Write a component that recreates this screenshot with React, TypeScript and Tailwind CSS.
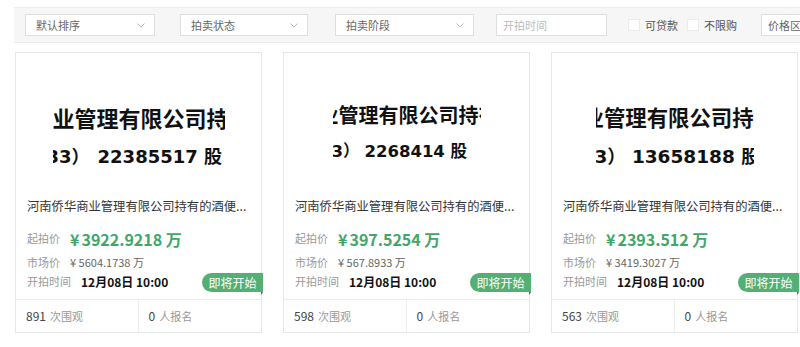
import React from "react"

type Lot = {
  id: number
  imgBox: string
  imgPad: string
  line1: string
  line1Class: string
  prefix: string
  shares: string
  line2Class: string
  sharesGap: string
  price: string
  market: string
  views: number
  signups: number
}

const LOTS: Lot[] = [
  {
    id: 1,
    imgBox: "w-[172px]",
    imgPad: "pt-[44px] leading-[40px]",
    line1: "业管理有限公司持有",
    line1Class: "text-[22px] ml-0",
    prefix: "33）",
    shares: "22385517",
    line2Class: "text-[18px] -ml-[6px]",
    sharesGap: "ml-[8px]",
    price: "3922.9218",
    market: "5604.1738",
    views: 891,
    signups: 0,
  },
  {
    id: 2,
    imgBox: "w-[148px]",
    imgPad: "pt-[43px] leading-[37px]",
    line1: "业管理有限公司持有",
    line1Class: "text-[20px] -ml-[14px]",
    prefix: "3）",
    shares: "2268414",
    line2Class: "text-[16.5px] -ml-[1px]",
    sharesGap: "ml-[5px]",
    price: "397.5254",
    market: "567.8933",
    views: 598,
    signups: 0,
  },
  {
    id: 3,
    imgBox: "w-[158px]",
    imgPad: "pt-[44px] leading-[40px]",
    line1: "业管理有限公司持有",
    line1Class: "text-[21.4px] -ml-[13px]",
    prefix: "3）",
    shares: "13658188",
    line2Class: "text-[18.5px] -ml-[1px]",
    sharesGap: "ml-[6px]",
    price: "2393.512",
    market: "3419.3027",
    views: 563,
    signups: 0,
  },
]

function Chevron() {
  return (
    <svg width="8" height="5" viewBox="0 0 8 5" fill="none">
      <path d="M0.5 0.5L4 4L7.5 0.5" stroke="#b5b5b5" strokeWidth="0.9" />
    </svg>
  )
}

function Select({ label, className }: { label: string; className: string }) {
  return (
    <div
      className={`flex h-[22px] shrink-0 items-center justify-between border border-[#dedede] bg-white pl-[10px] pr-[9px] text-[11px] text-[#666] ${className}`}
    >
      <span>{label}</span>
      <Chevron />
    </div>
  )
}

function Check({ label, className }: { label: string; className: string }) {
  return (
    <div className={`flex shrink-0 items-center ${className}`}>
      <span className="h-[12px] w-[12px] border border-[#ebebeb] bg-white" />
      <span className="ml-[5px] text-[11px] text-[#555]">{label}</span>
    </div>
  )
}

function FilterBar() {
  return (
    <div className="ml-[14px] mt-[7px] flex h-[36px] items-center border-y border-[#ededed] bg-[#f6f6f6] pl-[11px]">
      <Select label="默认排序" className="w-[130px]" />
      <Select label="拍卖状态" className="ml-[25px] w-[128px]" />
      <Select label="拍卖阶段" className="ml-[27px] w-[139px]" />
      <div className="ml-[22px] flex h-[22px] w-[111px] shrink-0 items-center border border-[#dedede] bg-white pl-[6px] text-[11px] text-[#bbb]">
        开拍时间
      </div>
      <Check label="可贷款" className="ml-[21px]" />
      <Check label="不限购" className="ml-[9px]" />
      <div className="ml-[24px] flex h-[22px] w-[100px] shrink-0 items-center border border-[#dedede] bg-white pl-[6px] text-[11px] text-[#666]">
        价格区间
      </div>
    </div>
  )
}

function LotCard({ lot }: { lot: Lot }) {
  return (
    <div className="relative w-[247px] shrink-0 border border-[#e6e6e6] bg-white">
      <div className="h-[136px] overflow-hidden">
        <div className={`mx-auto h-full overflow-hidden bg-white text-[#111] ${lot.imgBox} ${lot.imgPad}`}>
          <div className={`whitespace-nowrap font-semibold ${lot.line1Class}`}>{lot.line1}</div>
          <div
            className={`whitespace-nowrap font-bold font-['DejaVu_Sans','Noto_Sans_CJK_SC',sans-serif] ${lot.line2Class}`}
          >
            {lot.prefix}
            <span className={lot.sharesGap}>{lot.shares} 股</span>
          </div>
        </div>
      </div>

      <div className="px-[11px]">
        <p className="mt-[9px] overflow-hidden whitespace-nowrap text-[12.3px] leading-[16px] text-[#333]">
          河南侨华商业管理有限公司持有的酒便...
        </p>
        <div className="mt-[14px] flex h-[21px] items-center">
          <span className="mr-[10px] text-[11px] text-[#999]">起拍价</span>
          <span className="text-[16px] font-bold text-[#41a66a]">
            ¥<span className="ml-[2px]">{lot.price}</span> 万
          </span>
        </div>
        <div className="mt-[4px] flex h-[19px] items-center text-[11px]">
          <span className="mr-[10px] text-[#999]">市场价</span>
          <span className="text-[#666]">¥ {lot.market} 万</span>
        </div>
        <div className="flex h-[19px] items-center text-[11px]">
          <span className="mr-[10px] text-[#999]">开拍时间</span>
          <span className="text-[12px] font-bold text-[#111]">12月08日 10:00</span>
        </div>
      </div>

      <div className="absolute right-[-2px] top-[220px]">
        <div className="flex h-[19px] w-[61px] items-center justify-center rounded-l-full bg-[#52b075] text-[12px] text-white">
          即将开始
        </div>
        <div className="ml-auto h-0 w-0 border-r-[2px] border-t-[3px] border-r-transparent border-t-[#2e7a4b]" />
      </div>

      <div className="mt-[8px] grid h-[33px] grid-cols-2 border-t border-[#ececec] text-[11px]">
        <div className="flex items-center border-r border-[#ececec] pl-[10px]">
          <span className="text-[12px] text-[#444]">{lot.views}</span>
          <span className="ml-[4px] text-[#999]">次围观</span>
        </div>
        <div className="flex items-center pl-[10px]">
          <span className="text-[12px] text-[#444]">{lot.signups}</span>
          <span className="ml-[4px] text-[#999]">人报名</span>
        </div>
      </div>
    </div>
  )
}

export default function App() {
  return (
    <div className="h-[347px] w-[800px] overflow-hidden bg-white font-['Noto_Sans_CJK_SC',sans-serif]">
      <FilterBar />
      <div className="ml-[15px] mt-[9px] flex gap-[21px]">
        {LOTS.map((lot) => (
          <LotCard key={lot.id} lot={lot} />
        ))}
      </div>
    </div>
  )
}
